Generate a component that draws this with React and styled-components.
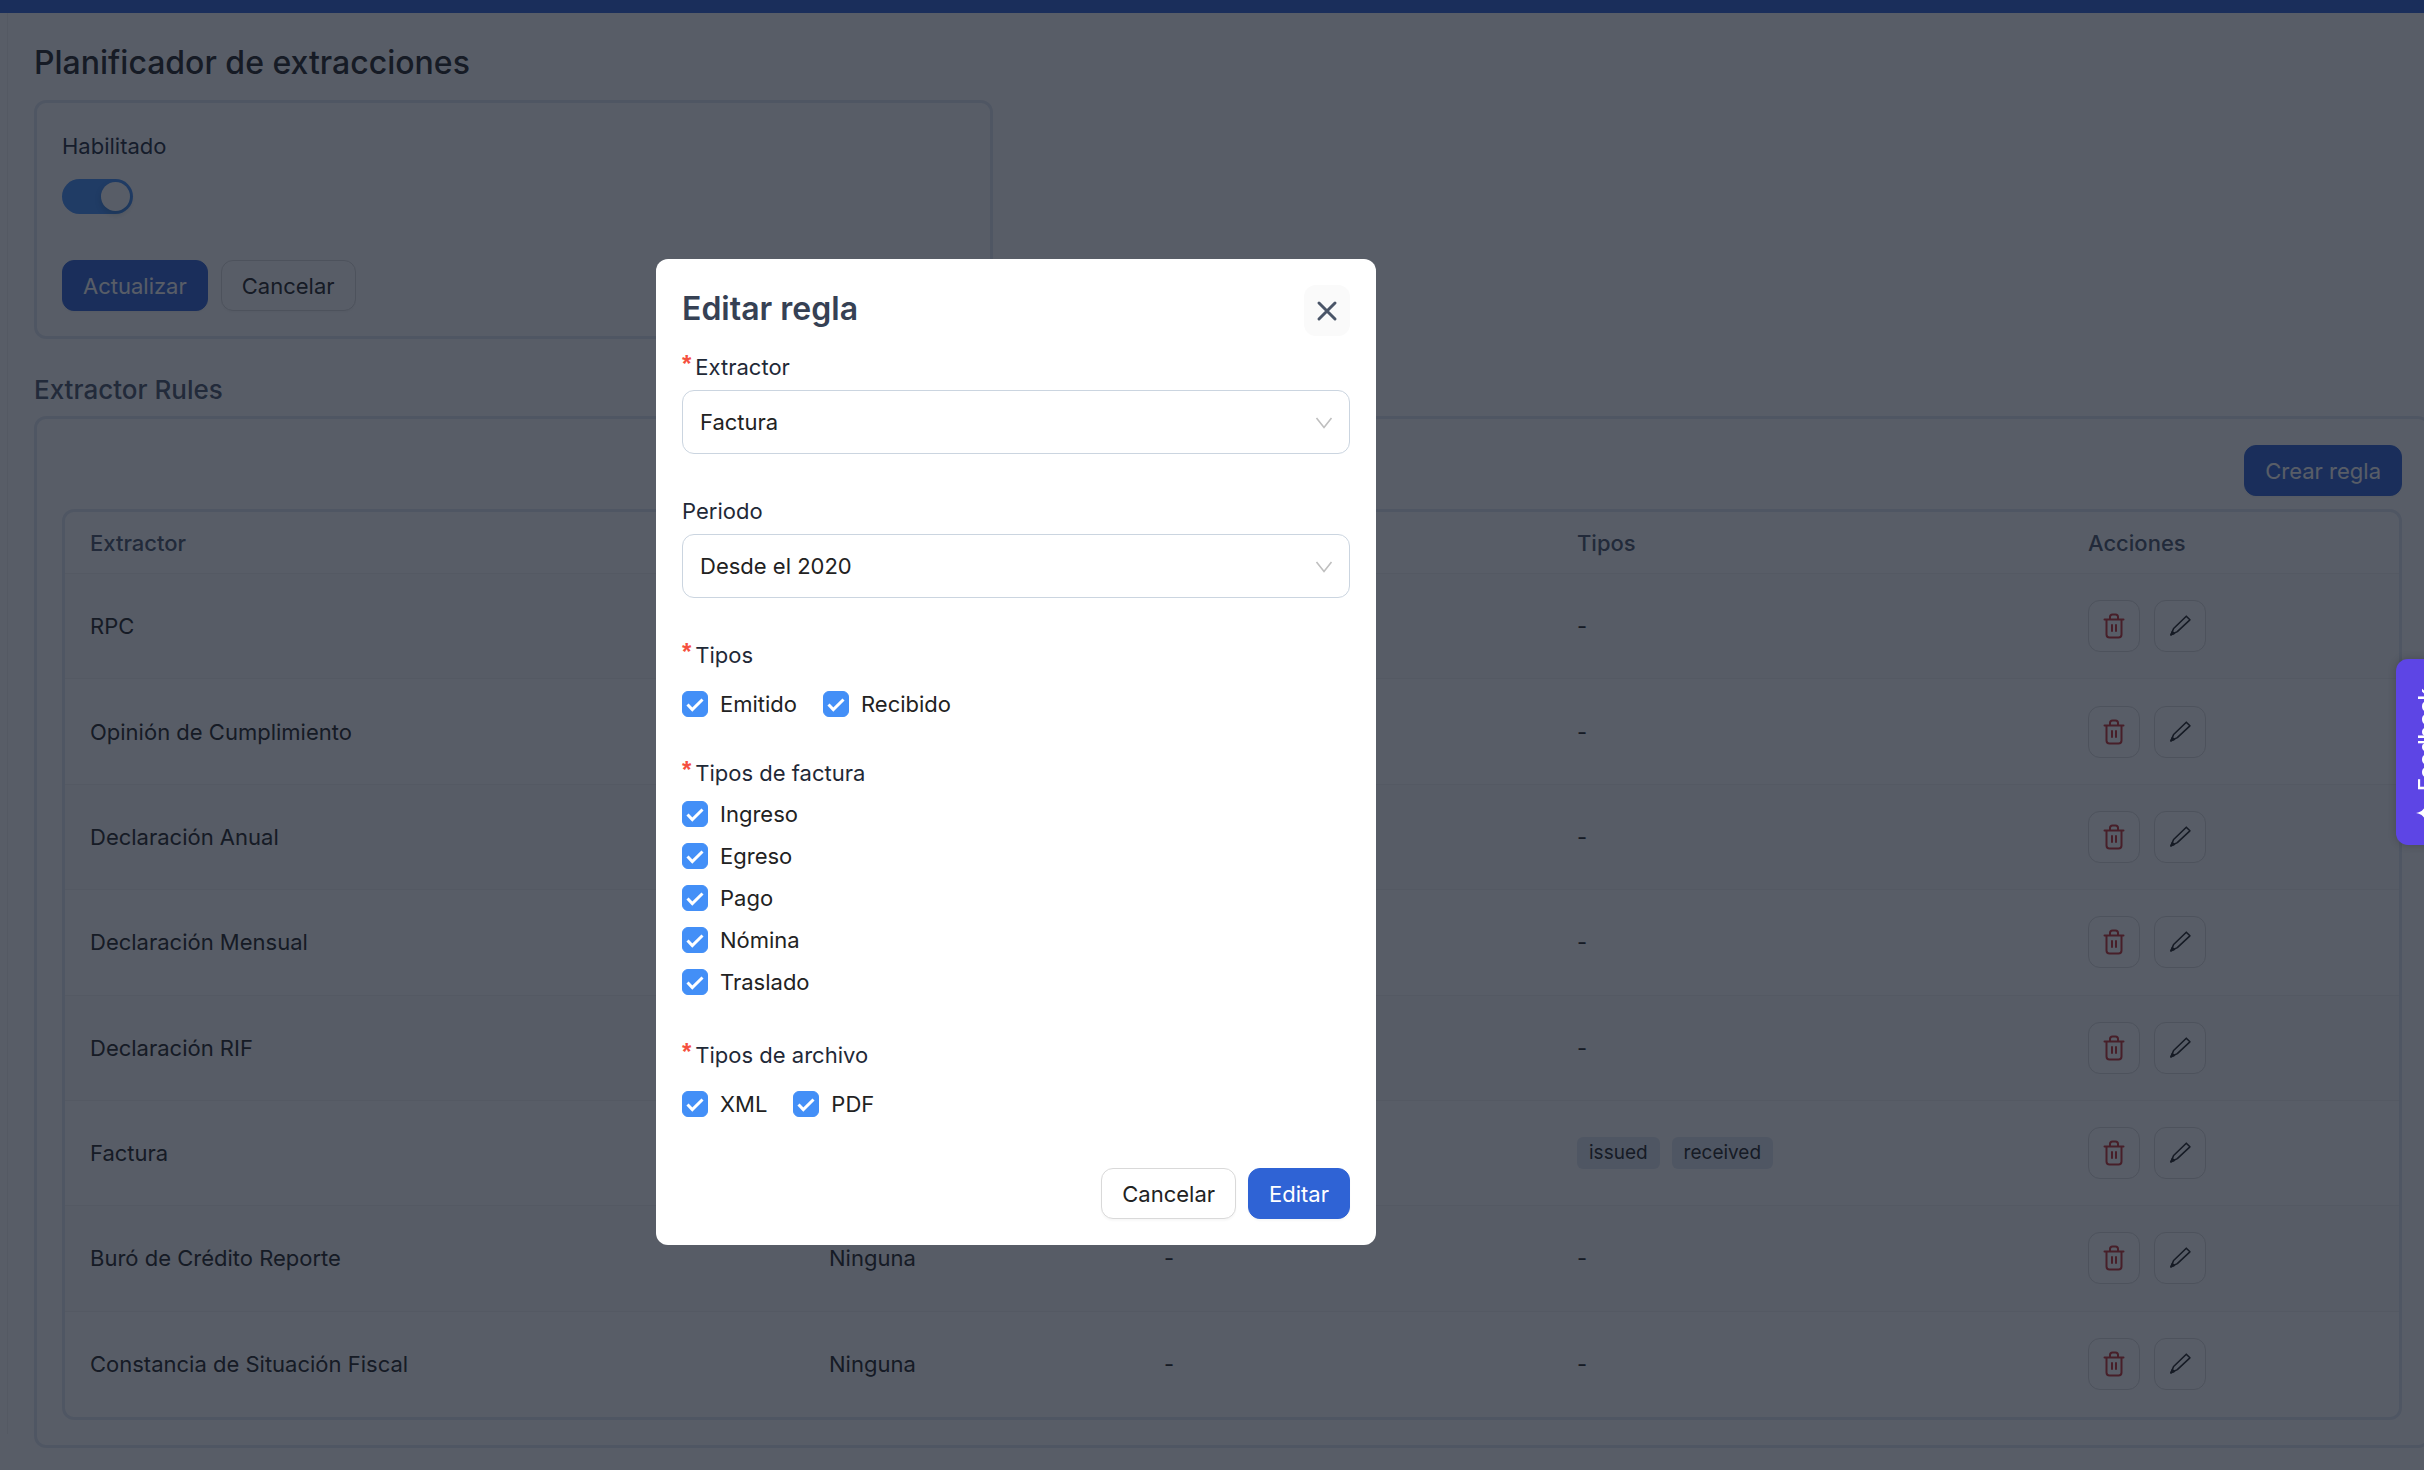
import React, { useState } from 'react';
import styled, { createGlobalStyle } from 'styled-components';

const RULES = [
  { name: 'RPC', types: [] },
  { name: 'Opinión de Cumplimiento', types: [] },
  { name: 'Declaración Anual', types: [] },
  { name: 'Declaración Mensual', types: [] },
  { name: 'Declaración RIF', types: [] },
  { name: 'Factura', types: ['issued', 'received'] },
  { name: 'Buró de Crédito Reporte', period: 'Ninguna', options: '-', types: [] },
  { name: 'Constancia de Situación Fiscal', period: 'Ninguna', options: '-', types: [] },
];

const COLUMNS = [739, 335, 413, 511, 336];

const App = () =>
  <>
    <GlobalStyle />
    <TopBar />
    <Body>
      <Rail />
      <Content>
        <Title>Planificador de extracciones</Title>
        <PlannerCard />
        <Subtitle>Extractor Rules</Subtitle>
        <RulesCard>
          <Toolbar>
            <Button $primary type="button">Crear regla</Button>
          </Toolbar>
          <RulesTable rules={RULES} />
        </RulesCard>
      </Content>
    </Body>
    <Overlay>
      <EditRule />
    </Overlay>
    <Feedback type="button">
      <SparkIcon />
      Feedback
    </Feedback>
  </>

export default App;


const PlannerCard = () => {
  const [enabled, setEnabled] = useState(true);
  return (
    <Planner>
      <Label htmlFor="enabled">Habilitado</Label>
      <Switch
        id="enabled"
        type="checkbox"
        role="switch"
        checked={enabled}
        onChange={() => setEnabled(!enabled)}
      />
      <Actions>
        <Button $primary type="button">Actualizar</Button>
        <Button type="button">Cancelar</Button>
      </Actions>
    </Planner>
  );
}

const RulesTable = ({ rules }) =>
  <TableFrame>
    <Table>
      <colgroup>
        {COLUMNS.map((width, i) => <col key={i} width={width} />)}
      </colgroup>
      <thead>
        <tr>
          <Th>Extractor</Th>
          <Th />
          <Th />
          <Th>Tipos</Th>
          <Th>Acciones</Th>
        </tr>
      </thead>
      <tbody>
        {rules.map(rule =>
          <Row key={rule.name}>
            <Td>{rule.name}</Td>
            <Td>{rule.period}</Td>
            <Td>{rule.options}</Td>
            <Td>
              {rule.types.length > 0
                ? <Tags>{rule.types.map(type => <Tag key={type}>{type}</Tag>)}</Tags>
                : '-'}
            </Td>
            <Td>
              <RowActions>
                <IconButton $danger type="button" aria-label="Eliminar"><TrashIcon /></IconButton>
                <IconButton type="button" aria-label="Editar"><PencilIcon /></IconButton>
              </RowActions>
            </Td>
          </Row>
        )}
      </tbody>
    </Table>
  </TableFrame>

const EditRule = () =>
  <Modal role="dialog" aria-labelledby="edit-title">
    <ModalHeader>
      <ModalTitle id="edit-title">Editar regla</ModalTitle>
      <CloseButton type="button" aria-label="Cerrar"><CloseIcon /></CloseButton>
    </ModalHeader>
    <SelectField id="extractor" label="Extractor" required options={['Factura']} />
    <SelectField id="period" label="Periodo" options={['Desde el 2020']} />
    <CheckGroup label="Tipos" options={['Emitido', 'Recibido']} />
    <CheckGroup label="Tipos de factura" stacked options={['Ingreso', 'Egreso', 'Pago', 'Nómina', 'Traslado']} />
    <CheckGroup label="Tipos de archivo" options={['XML', 'PDF']} />
    <ModalFooter>
      <Button type="button">Cancelar</Button>
      <Button $primary type="button">Editar</Button>
    </ModalFooter>
  </Modal>

const SelectField = ({ id, label, required, options }) =>
  <Field>
    <Label htmlFor={id}>
      {required && <Required>*</Required>}
      {label}
    </Label>
    <SelectBox>
      <Select id={id}>
        {options.map(option => <option key={option}>{option}</option>)}
      </Select>
      <ChevronIcon />
    </SelectBox>
  </Field>

const CheckGroup = ({ label, options, stacked }) =>
  <Group>
    <Legend><Required>*</Required>{label}</Legend>
    <Checks $stacked={stacked}>
      {options.map(option => <Check key={option} label={option} />)}
    </Checks>
  </Group>

const Check = ({ label }) => {
  const [checked, setChecked] = useState(true);
  return (
    <CheckLabel>
      <CheckInput type="checkbox" checked={checked} onChange={() => setChecked(!checked)} />
      {checked && <TickIcon />}
      {label}
    </CheckLabel>
  );
}


/////////////////// ICONS ///////////////////
const TrashIcon = () =>
  <svg width="24" height="26" viewBox="0 0 24 26" fill="none" stroke="currentColor" strokeWidth="2" strokeLinecap="round" strokeLinejoin="round">
    <path d="M2.500 6.500h19M4.500 6.500v15a3 3 0 0 0 3 3h9a3 3 0 0 0 3-3v-15M8 6V4a2.500 2.500 0 0 1 2.500-2.500h3A2.500 2.500 0 0 1 16 4v2M10 12v6M14 12v6" />
  </svg>

const PencilIcon = () =>
  <svg width="24" height="24" viewBox="0 0 24 24" fill="none" stroke="currentColor" strokeWidth="1.6" strokeLinejoin="round">
    <path d="M18.300 2.200l3.600 3.600L9.300 17.600l-6.300 3.200 2.600-6.300z" />
    <path d="M3 20.800l1.300-3.100 1.900 1.700z" fill="currentColor" />
  </svg>

const CloseIcon = () =>
  <svg width="22" height="22" viewBox="0 0 22 22" fill="none" stroke="currentColor" strokeWidth="3" strokeLinecap="round">
    <path d="M3 3l16 16M19 3l-16 16" />
  </svg>

const ChevronIcon = () =>
  <Chevron width="18" height="12" viewBox="0 0 18 12" fill="none" stroke="currentColor" strokeWidth="1.600">
    <path d="M1.500 1L9 10.500 16.500 1" />
  </Chevron>

const TickIcon = () =>
  <Tick width="26" height="26" viewBox="0 0 26 26" fill="none" stroke="#fff" strokeWidth="3">
    <path d="M5.500 13.500l4.800 5L20.500 8.500" />
  </Tick>

const SparkIcon = () =>
  <svg width="20" height="20" viewBox="0 0 20 20" fill="currentColor">
    <path d="M10 0c1.200 6 4 8.800 10 10-6 1.200-8.800 4-10 10-1.200-6-4-8.800-10-10 6-1.200 8.800-4 10-10z" />
  </svg>


/////////////////// PAGE ///////////////////
const GlobalStyle = createGlobalStyle`
  * {
    box-sizing: border-box;
  }
  body {
    margin: 0;
    overflow: hidden;
    background-color: #fff;
    color: #222;
    font-family: Inter, "Liberation Sans", sans-serif;
    font-size: 22px;
    line-height: 36px;
  }
  button, select {
    font: inherit;
    color: inherit;
  }
`

const TopBar = styled.div`
  height: 13px;
  background-color: #2f63d5;
`

const Body = styled.div`
  display: flex;
`

const Rail = styled.div`
  flex: none;
  width: 8px;
  margin-bottom: 14px;
  border-right: 1px solid #f0f0f0;
`

const Content = styled.main`
  flex-grow: 1;
  padding: 30px 0 0 26px;
  margin-right: -6px;
`

const Title = styled.h1`
  margin: 0 0 17px;
  font-size: 32px;
  font-weight: 500;
  line-height: 40px;
`

const Subtitle = styled.h2`
  margin: 36px 0 11px;
  color: #4a5568;
  font-size: 26px;
  font-weight: 500;
  line-height: 30px;
`

const Card = styled.section`
  border: 3px solid #e2e8f0;
  border-radius: 12px;
  padding: 25px;
`

const Planner = styled(Card)`
  display: flex;
  flex-direction: column;
  align-items: flex-start;
  max-width: 959px;
`

const RulesCard = styled(Card)`
  padding-top: 26px;
`

const Toolbar = styled.div`
  display: flex;
  justify-content: flex-end;
  margin-bottom: 13px;
`

const Actions = styled.div`
  display: flex;
  gap: 13px;
  margin-top: 46px;
`

const Button = styled.button`
  height: 51px;
  padding: 0 20px;
  border: 1px solid ${props => props.$primary ? '#2f63d5' : '#d9d9d9'};
  border-radius: 12px;
  background-color: ${props => props.$primary ? '#2f63d5' : '#fff'};
  color: ${props => props.$primary ? '#fff' : '#222'};
  box-shadow: 0 2px 2px rgba(0, 0, 0, 0.03);
`

const Switch = styled.input`
  appearance: none;
  width: 71px;
  height: 35px;
  margin: 15px 0 0;
  padding: 3px;
  border-radius: 18px;
  background-color: #bfbfbf;
  &::before {
    content: '';
    display: block;
    width: 29px;
    height: 29px;
    border-radius: 50%;
    background-color: #fff;
    box-shadow: 0 3px 6px rgba(0, 35, 11, 0.2);
  }
  &:checked {
    background-color: #438ff7;
  }
  &:checked::before {
    margin-left: auto;
  }
`


/////////////////// TABLE ///////////////////
const TableFrame = styled.div`
  overflow: hidden;
  border: 3px solid #e2e8f0;
  border-radius: 12px;
`

const Table = styled.table`
  width: 100%;
  height: 905px;
  table-layout: fixed;
  border-collapse: separate;
  border-spacing: 0;
`

const Th = styled.th`
  height: 62px;
  padding: 0 25px;
  border-bottom: 1px solid #f0f0f0;
  color: #4a5568;
  font-weight: 500;
  text-align: left;
`

const Td = styled.td`
  height: 105px;
  padding: 0 25px;
  border-bottom: 1px solid #f0f0f0;
`

const Row = styled.tr`
  &:nth-child(odd) {
    background-color: #fafafa;
  }
  &:last-child ${Td} {
    border-bottom: none;
  }
`

const Tags = styled.div`
  display: flex;
  gap: 12px;
`

const Tag = styled.span`
  padding: 0 12px;
  border-radius: 6px;
  background-color: #e2e8f0;
  font-size: 19px;
  line-height: 32px;
`

const RowActions = styled.div`
  display: flex;
  gap: 14px;
`

const IconButton = styled.button`
  display: flex;
  align-items: center;
  justify-content: center;
  width: 52px;
  height: 52px;
  padding: 0;
  border: 1px solid #d9d9d9;
  border-radius: 12px;
  background-color: #fff;
  color: ${props => props.$danger ? '#c53030' : '#222'};
`


/////////////////// MODAL ///////////////////
const Overlay = styled.div`
  position: fixed;
  inset: 0;
  display: flex;
  align-items: flex-start;
  justify-content: center;
  padding: 259px 392px 0 0;
  background-color: rgba(17, 24, 39, 0.7);
`

const Modal = styled.div`
  width: 720px;
  padding: 26px;
  border-radius: 12px;
  background-color: #fff;
`

const ModalHeader = styled.header`
  display: flex;
  align-items: flex-start;
  justify-content: space-between;
  margin-bottom: 13px;
`

const ModalTitle = styled.h2`
  margin: 0;
  color: #364154;
  font-size: 32px;
  font-weight: 600;
  line-height: 48px;
`

const CloseButton = styled.button`
  display: flex;
  align-items: center;
  justify-content: center;
  width: 46px;
  height: 51px;
  padding: 0;
  border: none;
  border-radius: 12px;
  background-color: #fafafa;
  color: #4a5568;
`

const Field = styled.div`
  margin-bottom: 39px;
`

const Label = styled.label`
  display: block;
  color: #1f2937;
`

const Required = styled.span`
  margin-right: 4px;
  color: #f5503f;
  font-family: "Liberation Sans", sans-serif;
  font-size: 24px;
  font-weight: 700;
  line-height: 0;
  vertical-align: 3px;
`

const SelectBox = styled.div`
  position: relative;
  margin-top: 5px;
`

const Select = styled.select`
  appearance: none;
  display: block;
  width: 100%;
  height: 64px;
  padding: 0 17px;
  border: 1px solid #cbd5e0;
  border-radius: 12px;
  background-color: #fff;
`

// sits over the native control in place of its own arrow
const Chevron = styled.svg`
  position: absolute;
  top: 27px;
  right: 17px;
  color: #bfbfbf;
  pointer-events: none;
`

const Group = styled.fieldset`
  margin: 0 0 33px;
  padding: 0;
  border: none;
`

const Legend = styled.legend`
  padding: 0;
  color: #1f2937;
`

const Checks = styled.div`
  display: flex;
  flex-direction: ${props => props.$stacked ? 'column' : 'row'};
  gap: ${props => props.$stacked ? '6px' : '26px'};
  padding: ${props => props.$stacked ? '5px 0 4px' : '13px 0 0'};
`

const CheckLabel = styled.label`
  position: relative;
  display: flex;
  align-items: center;
  gap: 12px;
`

const CheckInput = styled.input`
  appearance: none;
  width: 26px;
  height: 26px;
  margin: 0;
  border: 1px solid #cbd5e0;
  border-radius: 6px;
  &:checked {
    border-color: #438ff7;
    background-color: #438ff7;
  }
`

const Tick = styled.svg`
  position: absolute;
  left: 0;
  pointer-events: none;
`

const ModalFooter = styled.footer`
  display: flex;
  justify-content: flex-end;
  gap: 12px;
  margin-top: 46px;
`


/////////////////// FEEDBACK ///////////////////
const Feedback = styled.button`
  position: fixed;
  top: 659px;
  right: -32px;
  display: flex;
  align-items: center;
  gap: 12px;
  width: 60px;
  height: 186px;
  padding: 22px 0;
  border: none;
  border-radius: 0 12px 12px 0;
  background-color: #5d45e5;
  color: #fff;
  font-weight: 500;
  line-height: 60px;
  writing-mode: vertical-rl;
  transform: rotate(180deg);
  box-shadow: 0 0 8px rgba(0, 0, 0, 0.2);
`
